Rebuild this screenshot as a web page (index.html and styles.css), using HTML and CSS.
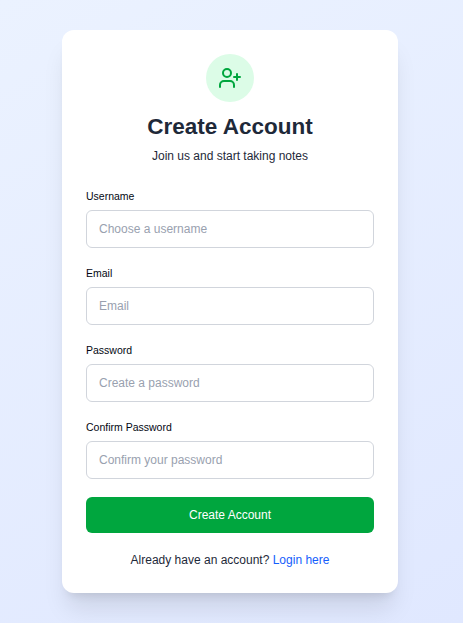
FILE: index.html
```html
<!DOCTYPE html>
<html lang="en">
<head>
<meta charset="utf-8">
<title>Create Account</title>
<link rel="stylesheet" href="styles.css">
</head>
<body>
<main class="card">
  <header class="header">
    <div class="badge">
      <svg class="icon" viewBox="0 0 24 24" fill="none" stroke="currentColor" stroke-width="2" stroke-linecap="round" stroke-linejoin="round"><path d="M16 21v-2a4 4 0 0 0-4-4H6a4 4 0 0 0-4 4v2"/><circle cx="9" cy="7" r="4"/><path d="M19 8v6M22 11h-6"/></svg>
    </div>
    <h1 class="title">Create Account</h1>
    <p class="subtitle">Join us and start taking notes</p>
  </header>
  <form class="form">
    <div class="field"><label class="label" for="username">Username</label><input class="input" id="username" type="text" placeholder="Choose a username"></div>
    <div class="field"><label class="label" for="email">Email</label><input class="input" id="email" type="email" placeholder="Email"></div>
    <div class="field"><label class="label" for="password">Password</label><input class="input" id="password" type="password" placeholder="Create a password"></div>
    <div class="field"><label class="label" for="confirm">Confirm Password</label><input class="input" id="confirm" type="password" placeholder="Confirm your password"></div>
    <button class="submit" type="button">Create Account</button>
  </form>
  <p class="footer">Already have an account? <a class="link" href="#">Login here</a></p>
</main>
</body>
</html>
```
FILE: styles.css
```css
* { box-sizing: border-box; margin: 0; padding: 0; }
body {
  min-height: 100vh;
  padding: 30px 65px 30px 62px;
  background: linear-gradient(152deg, #ebf2ff, #e0e8ff);
  font-family: "Liberation Sans", Arial, sans-serif;
  font-size: 12px;
  line-height: 18px;
  color: #1e2939;
}
.card {
  width: 336px;
  height: 563px;
  padding: 24px;
  background: #fff;
  border-radius: 12px;
  box-shadow: 0 20px 25px -5px rgb(0 0 0 / 0.1), 0 8px 10px -6px rgb(0 0 0 / 0.1);
}
.header { text-align: center; }
.badge {
  display: flex;
  align-items: center;
  justify-content: center;
  width: 48px;
  height: 48px;
  margin: 0 auto 9px;
  border-radius: 50%;
  background: #dcfce7;
  color: #00a63e;
}
.icon { width: 24px; height: 24px; }
.title { font-size: 22.5px; line-height: 32px; font-weight: 700; }
.subtitle { margin-top: 4px; }
.form { margin-top: 24px; }
.field { margin-bottom: 18px; }
.label { display: block; margin-bottom: 6px; font-size: 10.5px; line-height: 15px; color: #030712; }
.input {
  display: block;
  width: 100%;
  height: 38px;
  padding: 0 12px;
  border: 1px solid #d1d5dc;
  border-radius: 6px;
  background: #fff;
  font: inherit;
}
.input::placeholder { color: #99a1af; }
.submit {
  display: block;
  width: 100%;
  height: 36px;
  border: 0;
  border-radius: 6px;
  background: #00a63e;
  color: #fff;
  font: inherit;
}
.footer { margin-top: 18px; text-align: center; }
.link { color: #155dfc; text-decoration: none; }
```
